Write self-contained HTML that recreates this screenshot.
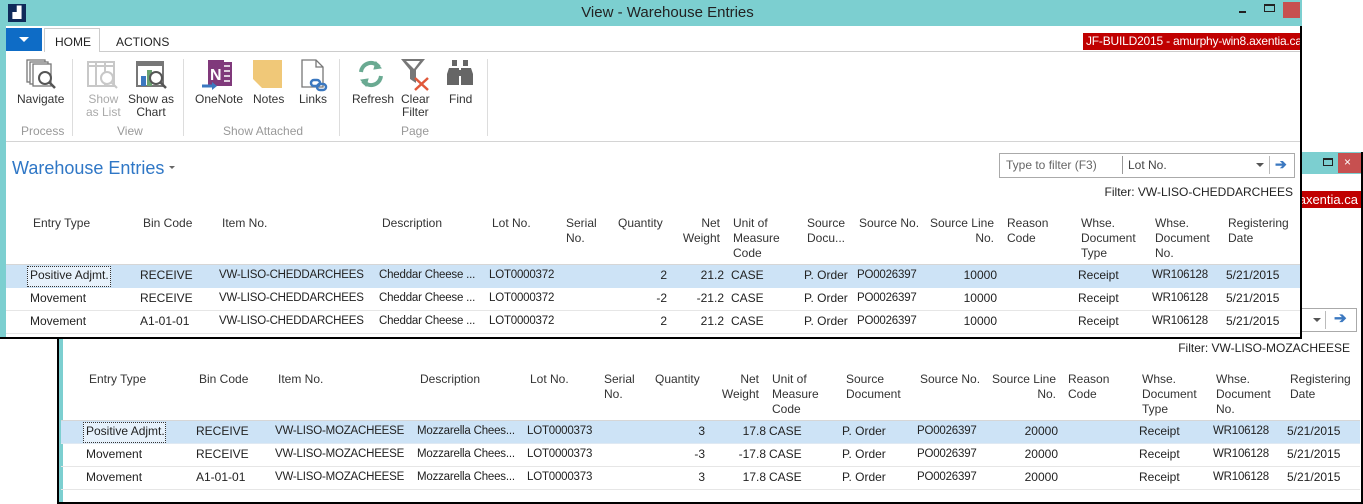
<!DOCTYPE html>
<html><head><meta charset="utf-8"><style>
*{margin:0;padding:0;box-sizing:border-box}
body{width:1363px;height:504px;overflow:hidden;background:#fff;position:relative;font-family:"Liberation Sans",sans-serif;font-size:12px;color:#222}
.a{position:absolute;white-space:nowrap;line-height:15px}
.r{text-align:right}
.h{color:#333}
.n{font-size:11.5px;letter-spacing:-0.2px}
.win{position:absolute;background:#fff;outline:2px solid #000;outline-offset:-2px;overflow:hidden}
.sel{background:#cde3f6}
.ln{position:absolute;height:1px;background:#e6e6e6}
.rib{font-size:12px;color:#333;text-align:center;line-height:13px}
.grp{color:#999;font-size:12px}
</style></head><body>

<!-- BACK WINDOW -->
<div class="win" style="left:57px;top:152px;width:1306px;height:352px">
 <div style="position:absolute;left:2px;top:0;width:4px;height:350px;background:#7ccfd0"></div>
 <div style="position:absolute;left:0;top:0;width:1304px;height:22px;background:#7ccfd0"></div>
 <div style="position:absolute;left:1281px;top:1px;width:23px;height:20px;background:#c75050;color:#fff;font-size:12px;line-height:18px;padding-left:6px">×</div>
 <div style="position:absolute;left:1266px;top:6px;width:10px;height:8px;border:1px solid #222;border-top-width:2px"></div>
 <div style="position:absolute;left:1100px;top:39px;width:204px;height:17px;background:#c00000;overflow:hidden"><span style="position:absolute;right:3px;top:0;color:#fff;font-size:13px;line-height:17px;white-space:nowrap">JF-BUILD2015 - amurphy-win8.axentia.ca</span></div>
 <div style="position:absolute;left:1000px;top:156px;width:300px;height:24px;border:1px solid #aaa"></div>
 <div style="position:absolute;left:1268px;top:159px;width:1px;height:18px;background:#bbb"></div>
 <div style="position:absolute;left:1256px;top:166px;border-left:4px solid transparent;border-right:4px solid transparent;border-top:4px solid #555"></div>
 <div class="a" style="left:1277px;top:159px;color:#3b78c0;font-size:15px;font-weight:bold">➔</div>
</div>
<div class="a r" style="left:1100px;top:341px;width:250px">Filter: VW-LISO-MOZACHEESE</div>
<div style="position:absolute;left:61px;top:420px;width:1299px;height:1px;background:#d6d6d6"></div>
<div class="sel" style="position:absolute;left:61px;top:421px;width:1299px;height:23px"></div>
<div style="position:absolute;left:83px;top:422px;width:83px;height:21px;border:1px dotted #333;background:#e6f1fb"></div>
<div class="ln" style="left:61px;top:466px;width:1299px"></div>
<div class="ln" style="left:61px;top:489px;width:1299px"></div>
<div class="ln" style="left:61px;top:443px;width:1299px;background:#dfe9f3"></div>

<div class="a h" style="left:89px;top:372px">Entry Type</div>
<div class="a h" style="left:199px;top:372px">Bin Code</div>
<div class="a h" style="left:278px;top:372px">Item No.</div>
<div class="a h" style="left:420px;top:372px">Description</div>
<div class="a h" style="left:530px;top:372px">Lot No.</div>
<div class="a h" style="left:604px;top:372px">Serial<br>No.</div>
<div class="a h" style="left:655px;top:372px">Quantity</div>
<div class="a h r" style="left:659px;top:372px;width:100px">Net<br>Weight</div>
<div class="a h" style="left:772px;top:372px">Unit of<br>Measure<br>Code</div>
<div class="a h" style="left:846px;top:372px">Source<br>Document</div>
<div class="a h" style="left:920px;top:372px">Source No.</div>
<div class="a h r" style="left:956px;top:372px;width:100px">Source Line<br>No.</div>
<div class="a h" style="left:1068px;top:372px">Reason<br>Code</div>
<div class="a h" style="left:1142px;top:372px">Whse.<br>Document<br>Type</div>
<div class="a h" style="left:1216px;top:372px">Whse.<br>Document<br>No.</div>
<div class="a h" style="left:1290px;top:372px">Registering<br>Date</div>

<div class="a" style="left:86px;top:424px">Positive Adjmt.</div>
<div class="a" style="left:86px;top:447px">Movement</div>
<div class="a" style="left:86px;top:470px">Movement</div>
<div class="a" style="left:196px;top:424px">RECEIVE</div>
<div class="a" style="left:196px;top:447px">RECEIVE</div>
<div class="a" style="left:196px;top:470px">A1-01-01</div>
<div class="a n" style="left:275px;top:424px">VW-LISO-MOZACHEESE</div>
<div class="a n" style="left:275px;top:447px">VW-LISO-MOZACHEESE</div>
<div class="a n" style="left:275px;top:470px">VW-LISO-MOZACHEESE</div>
<div class="a n" style="left:417px;top:424px">Mozzarella Chees...</div>
<div class="a n" style="left:417px;top:447px">Mozzarella Chees...</div>
<div class="a n" style="left:417px;top:470px">Mozzarella Chees...</div>
<div class="a n" style="left:527px;top:424px">LOT0000373</div>
<div class="a n" style="left:527px;top:447px">LOT0000373</div>
<div class="a n" style="left:527px;top:470px">LOT0000373</div>
<div class="a r" style="left:605px;top:424px;width:100px">3</div>
<div class="a r" style="left:605px;top:447px;width:100px">-3</div>
<div class="a r" style="left:605px;top:470px;width:100px">3</div>
<div class="a r" style="left:666px;top:424px;width:100px">17.8</div>
<div class="a r" style="left:666px;top:447px;width:100px">-17.8</div>
<div class="a r" style="left:666px;top:470px;width:100px">17.8</div>
<div class="a" style="left:769px;top:424px">CASE</div>
<div class="a" style="left:769px;top:447px">CASE</div>
<div class="a" style="left:769px;top:470px">CASE</div>
<div class="a" style="left:842px;top:424px">P. Order</div>
<div class="a" style="left:842px;top:447px">P. Order</div>
<div class="a" style="left:842px;top:470px">P. Order</div>
<div class="a n" style="left:917px;top:424px">PO0026397</div>
<div class="a n" style="left:917px;top:447px">PO0026397</div>
<div class="a n" style="left:917px;top:470px">PO0026397</div>
<div class="a r" style="left:958px;top:424px;width:100px">20000</div>
<div class="a r" style="left:958px;top:447px;width:100px">20000</div>
<div class="a r" style="left:958px;top:470px;width:100px">20000</div>
<div class="a" style="left:1139px;top:424px">Receipt</div>
<div class="a" style="left:1139px;top:447px">Receipt</div>
<div class="a" style="left:1139px;top:470px">Receipt</div>
<div class="a n" style="left:1213px;top:424px">WR106128</div>
<div class="a n" style="left:1213px;top:447px">WR106128</div>
<div class="a n" style="left:1213px;top:470px">WR106128</div>
<div class="a" style="left:1287px;top:424px">5/21/2015</div>
<div class="a" style="left:1287px;top:447px">5/21/2015</div>
<div class="a" style="left:1287px;top:470px">5/21/2015</div>

<!-- FRONT WINDOW -->
<div class="win" style="left:0;top:0;width:1302px;height:339px;background:#fff">
 <div style="position:absolute;left:0;top:0;width:6px;height:337px;background:#7ccfd0"></div>
 <div style="position:absolute;left:0;top:0;width:1302px;height:26px;background:#7ccfd0"></div>
 <div style="position:absolute;left:8px;top:4px;width:18px;height:18px;background:#0f2a5a;color:#fff;font-size:11px;font-weight:bold;line-height:18px;text-align:center">▟</div>
 <div class="a" style="left:560px;top:4px;width:215px;text-align:center;font-size:15px;line-height:18px;color:#222">View - Warehouse Entries</div>
 <div style="position:absolute;left:1239px;top:11px;width:7px;height:2px;background:#222"></div>
 <div style="position:absolute;left:1264px;top:4px;width:11px;height:8px;border:1px solid #222;border-top-width:2px"></div>
 <div style="position:absolute;left:1283px;top:2px;width:17px;height:16px;background:#c75050"></div>
 <!-- tabs -->
 <div style="position:absolute;left:6px;top:28px;width:36px;height:23px;background:#0e6cc6"></div>
 <div style="position:absolute;left:19px;top:37px;border-left:5px solid transparent;border-right:5px solid transparent;border-top:5px solid #fff"></div>
 <div style="position:absolute;left:44px;top:28px;width:56px;height:24px;border:1px solid #ccc;border-bottom:none;background:#fff"></div>
 <div class="a" style="left:55px;top:35px;font-size:12px">HOME</div>
 <div class="a" style="left:116px;top:35px;font-size:12px">ACTIONS</div>
 <div style="position:absolute;left:1083px;top:33px;width:217px;height:17px;background:#c00000;overflow:hidden;color:#fff;font-size:12px;line-height:17px;padding-left:3px;white-space:nowrap;letter-spacing:-0.2px">JF-BUILD2015 - amurphy-win8.axentia.ca</div>
 <div style="position:absolute;left:100px;top:51px;width:1200px;height:1px;background:#ccc"></div>
 <div style="position:absolute;left:6px;top:141px;width:1294px;height:1px;background:#d4d4d4"></div>
 <!-- ribbon separators -->
 <div style="position:absolute;left:72px;top:59px;width:1px;height:77px;background:#ddd"></div>
 <div style="position:absolute;left:183px;top:59px;width:1px;height:77px;background:#ddd"></div>
 <div style="position:absolute;left:339px;top:59px;width:1px;height:77px;background:#ddd"></div>
 <div style="position:absolute;left:487px;top:59px;width:1px;height:77px;background:#ddd"></div>
 <!-- icons -->
 <svg style="position:absolute;left:25px;top:58px" width="34" height="34" viewBox="0 0 34 34" fill="none" stroke="#777" stroke-width="1.3"><rect x="2" y="2" width="18" height="22"/><rect x="5" y="4" width="18" height="22" fill="#fff"/><rect x="8" y="6" width="18" height="22" fill="#fff"/><circle cx="20" cy="20" r="6" stroke="#555" stroke-width="2"/><path d="M24 24l6 6" stroke="#555" stroke-width="2.5"/></svg>
 <svg style="position:absolute;left:86px;top:60px" width="34" height="32" viewBox="0 0 34 32" fill="none" stroke="#c8c8c8" stroke-width="2"><rect x="2" y="2" width="26" height="24"/><path d="M2 6h26M10 2v24M19 2v24"/><circle cx="21" cy="18" r="6" fill="#fff"/><path d="M25 22l6 6"/></svg>
 <svg style="position:absolute;left:135px;top:60px" width="34" height="32" viewBox="0 0 34 32"><rect x="2" y="2" width="26" height="24" fill="none" stroke="#777" stroke-width="2"/><rect x="2" y="2" width="26" height="4" fill="#777"/><rect x="6" y="16" width="5" height="10" fill="#3b78c0"/><rect x="12" y="10" width="5" height="16" fill="#6aa070"/><circle cx="21" cy="18" r="6" fill="#fff" stroke="#555" stroke-width="2"/><path d="M25 22l6 6" stroke="#555" stroke-width="2.5"/></svg>
 <svg style="position:absolute;left:200px;top:58px" width="34" height="34" viewBox="0 0 34 34"><rect x="16" y="4" width="16" height="24" fill="#80397b"/><path d="M18 8h12M18 13h12M18 18h12M18 23h12" stroke="#fff" stroke-width="1.5"/><rect x="8" y="2" width="16" height="26" fill="#80397b"/><text x="10" y="22" font-family="Liberation Sans" font-size="16" font-weight="bold" fill="#fff">N</text><path d="M2 28h12" stroke="#3b78c0" stroke-width="3"/><path d="M12 24l5 4-5 4z" fill="#3b78c0"/></svg>
 <div style="position:absolute;left:253px;top:60px;width:29px;height:28px;background:#f0c878"></div>
 <div style="position:absolute;left:253px;top:79px;width:0;height:0;border-top:9px solid transparent;border-left:9px solid #fff"></div>
 <svg style="position:absolute;left:299px;top:58px" width="32" height="34" viewBox="0 0 32 34" fill="none"><path d="M3 2h14l7 7v20H3z" stroke="#777" stroke-width="1.3"/><path d="M17 2v7h7" stroke="#777" stroke-width="1.3"/><rect x="12" y="22" width="9" height="6" rx="3" stroke="#3b78c0" stroke-width="2.5"/><rect x="18" y="26" width="9" height="6" rx="3" stroke="#3b78c0" stroke-width="2.5"/></svg>
 <svg style="position:absolute;left:356px;top:58px" width="30" height="32" viewBox="0 0 30 32" fill="none" stroke="#6aaa92" stroke-width="4"><path d="M5 14a10 10 0 0 1 18-5"/><path d="M25 18a10 10 0 0 1-18 5"/><path d="M20 4l5 6-7 1z" fill="#6aaa92" stroke-width="1"/><path d="M10 28l-5-6 7-1z" fill="#6aaa92" stroke-width="1"/></svg>
 <svg style="position:absolute;left:400px;top:58px" width="32" height="34" viewBox="0 0 32 34"><path d="M1 1h24l-9 11v13l-6-4V12z" fill="#777"/><path d="M6 3h14l-6 8" fill="#fff"/><path d="M15 20l13 12M28 20L15 32" stroke="#e0583a" stroke-width="2.5"/></svg>
 <svg style="position:absolute;left:446px;top:58px" width="28" height="30" viewBox="0 0 28 30" fill="#666"><rect x="6" y="2" width="5" height="6"/><rect x="17" y="2" width="5" height="6"/><path d="M3 10h10v17H1V16z"/><path d="M15 10h10l2 6v11H15z"/><rect x="12" y="12" width="4" height="6"/></svg>
 <div class="a rib" style="left:17px;top:93px">Navigate</div>
 <div class="a rib" style="left:86px;top:93px;color:#aaa">Show<br>as List</div>
 <div class="a rib" style="left:128px;top:93px;width:46px">Show as<br>Chart</div>
 <div class="a rib" style="left:195px;top:93px">OneNote</div>
 <div class="a rib" style="left:253px;top:93px">Notes</div>
 <div class="a rib" style="left:299px;top:93px">Links</div>
 <div class="a rib" style="left:352px;top:93px">Refresh</div>
 <div class="a rib" style="left:401px;top:93px">Clear<br>Filter</div>
 <div class="a rib" style="left:449px;top:93px">Find</div>
 <div class="a grp" style="left:21px;top:124px">Process</div>
 <div class="a grp" style="left:117px;top:124px">View</div>
 <div class="a grp" style="left:223px;top:124px">Show Attached</div>
 <div class="a grp" style="left:401px;top:124px">Page</div>
 <!-- title -->
 <div class="a" style="left:12px;top:157px;font-size:18px;line-height:22px;color:#2f77c6">Warehouse Entries</div>
 <div style="position:absolute;left:169px;top:166px;border-left:3px solid transparent;border-right:3px solid transparent;border-top:3px solid #666"></div>
 <!-- filter box -->
 <div style="position:absolute;left:999px;top:153px;width:296px;height:25px;border:1px solid #aaa;background:#fff"></div>
 <div class="a" style="left:1006px;top:158px;color:#666">Type to filter (F3)</div>
 <div style="position:absolute;left:1122px;top:156px;width:1px;height:18px;background:#999"></div>
 <div class="a" style="left:1128px;top:158px;color:#444">Lot No.</div>
 <div style="position:absolute;left:1256px;top:163px;border-left:4px solid transparent;border-right:4px solid transparent;border-top:4px solid #555"></div>
 <div style="position:absolute;left:1269px;top:156px;width:1px;height:18px;background:#bbb"></div>
 <div class="a" style="left:1275px;top:157px;color:#3b78c0;font-size:14px;font-weight:bold">➔</div>
 <div class="a r" style="left:1000px;top:185px;width:293px">Filter: VW-LISO-CHEDDARCHEES</div>
 <!-- grid -->
 <div style="position:absolute;left:6px;top:264px;width:1294px;height:1px;background:#d6d6d6"></div>
 <div class="sel" style="position:absolute;left:6px;top:265px;width:1294px;height:23px"></div>
 <div style="position:absolute;left:27px;top:266px;width:84px;height:21px;border:1px dotted #333;background:#e6f1fb"></div>
 <div class="ln" style="left:6px;top:310px;width:1294px"></div>
 <div class="ln" style="left:6px;top:333px;width:1294px"></div>

 <div class="a h" style="left:33px;top:216px">Entry Type</div>
 <div class="a h" style="left:143px;top:216px">Bin Code</div>
 <div class="a h" style="left:222px;top:216px">Item No.</div>
 <div class="a h" style="left:382px;top:216px">Description</div>
 <div class="a h" style="left:492px;top:216px">Lot No.</div>
 <div class="a h" style="left:566px;top:216px">Serial<br>No.</div>
 <div class="a h" style="left:618px;top:216px">Quantity</div>
 <div class="a h r" style="left:620px;top:216px;width:100px">Net<br>Weight</div>
 <div class="a h" style="left:733px;top:216px">Unit of<br>Measure<br>Code</div>
 <div class="a h" style="left:807px;top:216px">Source<br>Docu...</div>
 <div class="a h" style="left:859px;top:216px">Source No.</div>
 <div class="a h r" style="left:894px;top:216px;width:100px">Source Line<br>No.</div>
 <div class="a h" style="left:1007px;top:216px">Reason<br>Code</div>
 <div class="a h" style="left:1081px;top:216px">Whse.<br>Document<br>Type</div>
 <div class="a h" style="left:1155px;top:216px">Whse.<br>Document<br>No.</div>
 <div class="a h" style="left:1228px;top:216px">Registering<br>Date</div>

 <div class="a" style="left:30px;top:268px">Positive Adjmt.</div>
 <div class="a" style="left:30px;top:291px">Movement</div>
 <div class="a" style="left:30px;top:314px">Movement</div>
 <div class="a" style="left:140px;top:268px">RECEIVE</div>
 <div class="a" style="left:140px;top:291px">RECEIVE</div>
 <div class="a" style="left:140px;top:314px">A1-01-01</div>
 <div class="a n" style="left:219px;top:268px">VW-LISO-CHEDDARCHEES</div>
 <div class="a n" style="left:219px;top:291px">VW-LISO-CHEDDARCHEES</div>
 <div class="a n" style="left:219px;top:314px">VW-LISO-CHEDDARCHEES</div>
 <div class="a n" style="left:379px;top:268px">Cheddar Cheese ...</div>
 <div class="a n" style="left:379px;top:291px">Cheddar Cheese ...</div>
 <div class="a n" style="left:379px;top:314px">Cheddar Cheese ...</div>
 <div class="a n" style="left:489px;top:268px">LOT0000372</div>
 <div class="a n" style="left:489px;top:291px">LOT0000372</div>
 <div class="a n" style="left:489px;top:314px">LOT0000372</div>
 <div class="a r" style="left:567px;top:268px;width:100px">2</div>
 <div class="a r" style="left:567px;top:291px;width:100px">-2</div>
 <div class="a r" style="left:567px;top:314px;width:100px">2</div>
 <div class="a r" style="left:624px;top:268px;width:100px">21.2</div>
 <div class="a r" style="left:624px;top:291px;width:100px">-21.2</div>
 <div class="a r" style="left:624px;top:314px;width:100px">21.2</div>
 <div class="a" style="left:731px;top:268px">CASE</div>
 <div class="a" style="left:731px;top:291px">CASE</div>
 <div class="a" style="left:731px;top:314px">CASE</div>
 <div class="a" style="left:804px;top:268px">P. Order</div>
 <div class="a" style="left:804px;top:291px">P. Order</div>
 <div class="a" style="left:804px;top:314px">P. Order</div>
 <div class="a n" style="left:857px;top:268px">PO0026397</div>
 <div class="a n" style="left:857px;top:291px">PO0026397</div>
 <div class="a n" style="left:857px;top:314px">PO0026397</div>
 <div class="a r" style="left:897px;top:268px;width:100px">10000</div>
 <div class="a r" style="left:897px;top:291px;width:100px">10000</div>
 <div class="a r" style="left:897px;top:314px;width:100px">10000</div>
 <div class="a" style="left:1078px;top:268px">Receipt</div>
 <div class="a" style="left:1078px;top:291px">Receipt</div>
 <div class="a" style="left:1078px;top:314px">Receipt</div>
 <div class="a n" style="left:1152px;top:268px">WR106128</div>
 <div class="a n" style="left:1152px;top:291px">WR106128</div>
 <div class="a n" style="left:1152px;top:314px">WR106128</div>
 <div class="a" style="left:1226px;top:268px">5/21/2015</div>
 <div class="a" style="left:1226px;top:291px">5/21/2015</div>
 <div class="a" style="left:1226px;top:314px">5/21/2015</div>
</div>
</body></html>
